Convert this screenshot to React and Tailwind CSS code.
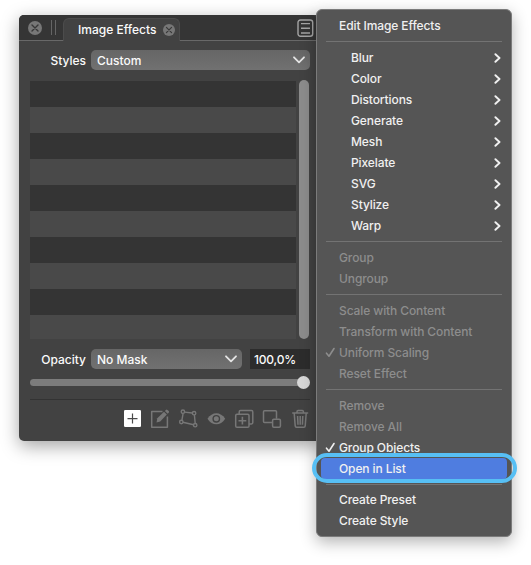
import React from "react";

const menu = [
  { label: "Edit Image Effects" },
  null,
  { label: "Blur", sub: true },
  { label: "Color", sub: true },
  { label: "Distortions", sub: true },
  { label: "Generate", sub: true },
  { label: "Mesh", sub: true },
  { label: "Pixelate", sub: true },
  { label: "SVG", sub: true },
  { label: "Stylize", sub: true },
  { label: "Warp", sub: true },
  null,
  { label: "Group", off: true },
  { label: "Ungroup", off: true },
  null,
  { label: "Scale with Content", off: true },
  { label: "Transform with Content", off: true },
  { label: "Uniform Scaling", off: true, checked: true },
  { label: "Reset Effect", off: true },
  null,
  { label: "Remove", off: true },
  { label: "Remove All", off: true },
  { label: "Group Objects", checked: true },
  { label: "Open in List", active: true },
  null,
  { label: "Create Preset" },
  { label: "Create Style" },
];

function CloseIcon({ size }) {
  return (
    <svg width={size} height={size} viewBox="0 0 14 14" className="shrink-0">
      <circle cx="7" cy="7" r="7" fill="#777777" />
      <path d="M4 4l6 6M10 4l-6 6" stroke="#383838" strokeWidth="1.4" strokeLinecap="round" />
    </svg>
  );
}

function Chevron() {
  return (
    <svg width="12" height="8" viewBox="0 0 12 8" fill="none" stroke="#e4e4e4" strokeWidth="1.8" strokeLinecap="round" strokeLinejoin="round">
      <path d="M1 1.3L6 6.3L11 1.3" />
    </svg>
  );
}

function Header() {
  return (
    <div className="flex h-[26px] shrink-0 rounded-t-[5px] bg-[#353535]">
      <div className="flex w-[44px] items-center border-b border-[#686868] pl-[9px]">
        <CloseIcon size={14} />
        <div className="ml-[9px] h-[15px] w-[5px] border-x border-[#656565]" />
      </div>
      <div className="mt-[3px] flex w-[117px] items-center rounded-t-[6px] border-x border-t border-[#4c4c4c] bg-[#424242] pl-[14px]">
        <span className="w-[80px] whitespace-nowrap">Image Effects</span>
        <span className="ml-[5px]"><CloseIcon size={12} /></span>
      </div>
      <div className="flex flex-1 justify-end border-b border-[#686868] pr-[3px] pt-[4px]">
        <svg width="17" height="18" viewBox="0 0 17 18" fill="none" stroke="#a5a5a5" strokeWidth="1.4">
          <rect x="1" y="1" width="14.7" height="16.3" rx="2.5" />
          <path d="M4 4.6h9M4 9.3h9M4 14h9" />
        </svg>
      </div>
    </div>
  );
}

function Toolbar() {
  return (
    <svg width="186" height="20" viewBox="124 409 186 20" fill="none" stroke="#777777" strokeWidth="1.5" strokeLinejoin="round">
      <rect x="124" y="410" width="17" height="17" rx="1.3" fill="#ffffff" stroke="none" />
      <path d="M132.5 413.6v10M127.5 418.6h10" stroke="#4a4a4a" strokeWidth="1.2" />
      <path d="M162.5 411.5h-10.8v15.7h15.7v-10.6" />
      <path d="M156.5 422.5l.8-4.2l6.7-6.5l2.8 2.8l-6.6 6.8z" fill="#777777" stroke="none" />
      <path d="M164.9 410.9l1-1q.8-.7 1.6 0l1.2 1.2q.8.8 0 1.6l-1 1z" fill="#777777" stroke="none" />
      <g strokeWidth="1.4">
        <path d="M184.5 412.1L192.3 413M183.1 413.4L181.9 420.4M194.4 414.9L195.2 423.4M182.9 422.2L193.6 424.8" />
        <circle cx="182.9" cy="411.7" r="1.7" />
        <circle cx="194.1" cy="413.2" r="1.7" />
        <circle cx="181.3" cy="422" r="1.7" />
        <circle cx="195.2" cy="425.2" r="1.7" />
      </g>
      <path d="M207.5 418.8C212 411.4 220.6 411.4 225.2 418.8C220.6 426.2 212 426.2 207.5 418.8Z" fill="#777777" stroke="none" />
      <circle cx="216.3" cy="418.8" r="3.2" fill="#777777" stroke="#424242" strokeWidth="1.4" />
      <rect x="235.7" y="414.2" width="13.3" height="13" rx="1.3" />
      <path d="M239.2 414v-2.1q0-1.3 1.3-1.3h11q1.3 0 1.3 1.3v10.7q0 1.3-1.3 1.3H249" />
      <path d="M242.4 416.8v7.8M238.5 420.7h7.8" strokeWidth="1.6" />
      <path d="M272 422.5h-7.5q-1 0-1-1v-9.7q0-1 1-1h11q1 0 1 1v7" />
      <rect x="272.6" y="419.3" width="7.8" height="7.9" rx="1.2" />
      <path d="M292.2 413.1h16M297 413v-1.3q0-1.1 1.1-1.1h4.2q1.1 0 1.1 1.1v1.3M294.2 413.3l1 12.6q.1 1.4 1.3 1.4h7.4q1.2 0 1.3-1.4l1-12.6M297.6 416l.4 8.7M300.2 416v8.7M302.8 416l-.4 8.7" />
    </svg>
  );
}

function Panel() {
  return (
    <div className="ml-[19px] mt-[15px] flex h-[426px] w-[304px] shrink-0 flex-col rounded-[5px] bg-[#424242] text-[12px] font-medium text-[#fafafa] shadow-[0_5px_18px_rgba(0,0,0,0.36)]">
      <div className="w-[298px]">
        <Header />
        <div className="mt-[9px] flex h-[20px] items-center">
          <span className="w-[67px] pt-[2px] text-right">Styles</span>
          <div className="ml-[5px] flex h-[20px] w-[219px] items-center justify-between rounded-[5px] bg-linear-to-b from-[#666666] to-[#717171] pl-[6px] pr-[5px]">
            <span className="pt-px">Custom</span>
            <Chevron />
          </div>
        </div>
        <div className="ml-[11px] mt-[10px] flex h-[259px]">
          <div className="mt-px h-[258px] w-[266px] overflow-hidden">
            {Array.from({ length: 10 }, (_, i) => (
              <div key={i} className={i % 2 ? "h-[26px] bg-[#494949]" : "h-[26px] bg-[#343434]"} />
            ))}
          </div>
          <div className="ml-[3px] w-[10px] rounded-full bg-[#8c8c8c]" />
        </div>
        <div className="mt-[10px] flex h-[20px] items-center">
          <span className="w-[67px] pt-[2px] text-right">Opacity</span>
          <div className="ml-[5px] flex h-[20px] w-[151px] items-center justify-between rounded-[5px] bg-linear-to-b from-[#666666] to-[#717171] pl-[6px] pr-[5px]">
            <span className="pt-px">No Mask</span>
            <Chevron />
          </div>
          <div className="ml-[8px] flex h-[20px] w-[60px] items-center bg-[#2c2c2c] pl-[4px] pt-px tracking-[-0.2px]">100,0%</div>
        </div>
        <div className="ml-[11px] mt-[6px] flex h-[14px] w-[280px] items-center">
          <div className="h-[7px] w-[268px] rounded-l-full bg-[#7c7c7c]" />
          <div className="-ml-px size-[13px] shrink-0 rounded-full bg-[#d8d8d8]" />
        </div>
        <div className="ml-[11px] mt-[10px] h-px w-[280px] bg-[#333333]" />
        <div className="ml-[105px] mt-[9px]"><Toolbar /></div>
      </div>
    </div>
  );
}

function MenuRow({ item }) {
  const tone = item.off ? "text-[#8d8d8d]" : "text-[#f0f0f0]";
  return (
    <div className={`mx-[4px] flex h-[21px] items-center rounded-[4px] text-[12px] font-medium tracking-[-0.1px] ${tone} ${item.active ? "bg-[#4f7de0]" : ""}`}>
      <span className={`flex shrink-0 pl-[4px] ${item.sub ? "w-[30px]" : "w-[18px]"}`}>
        {item.checked && (
          <svg width="11" height="11" viewBox="0 0 11 11" fill="none" stroke="currentColor" strokeWidth="1.6" strokeLinecap="round" strokeLinejoin="round">
            <path d="M1.5 6.2L4 9.2L9 1.5" />
          </svg>
        )}
      </span>
      <span className="flex-1 whitespace-nowrap pt-px">{item.label}</span>
      {item.sub && (
        <svg width="7" height="10" viewBox="0 0 7 10" className="mr-[6px] mt-px" fill="none" stroke="currentColor" strokeWidth="1.9" strokeLinecap="round" strokeLinejoin="round">
          <path d="M1.4 1.2L5.5 5L1.4 8.8" />
        </svg>
      )}
    </div>
  );
}

export default function App() {
  return (
    <div className="relative flex h-[565px] w-[531px] items-start overflow-hidden bg-white font-['Inter','Liberation_Sans',sans-serif] leading-none">
      <Panel />
      <div className="absolute left-[316px] top-[9px] h-[528px] w-[196px] rounded-[6px] border border-[#7b7b7b] bg-[#555555] pt-[5px] shadow-[0_5px_16px_rgba(0,0,0,0.3)]">
        {menu.map((item, i) =>
          item ? (
            <MenuRow key={i} item={item} />
          ) : (
            <div key={i} className="mx-[9px] flex h-[10.9px] items-center">
              <div className="h-px w-full bg-[#737373]" />
            </div>
          )
        )}
      </div>
      <div className="absolute left-[312px] top-[453px] h-[30px] w-[205px] rounded-full border-4 border-[#57bff4]" />
    </div>
  );
}
